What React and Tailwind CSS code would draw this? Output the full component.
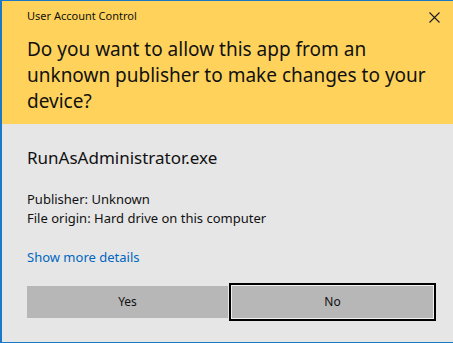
import React from 'react';

const CloseIcon = () => (
  <svg width="11" height="11" viewBox="0 0 11 11" className="block">
    <path d="M0.5 0.5 L10.5 10.5 M10.5 0.5 L0.5 10.5" stroke="#1a1a1a" strokeWidth="1.1" />
  </svg>
);

const App = () => {
  return (
    <div className="w-[453px] h-[343px] flex flex-col border-t border-b border-l-2 border-[#1a78c8] font-['Noto_Sans','Open_Sans',sans-serif] text-[#111] overflow-hidden">
      {/* Header */}
      <div className="h-[123px] shrink-0 bg-[#ffd35b] pl-[25px] pr-[12px] pt-[6px]">
        <div className="flex items-start justify-between">
          <div className="text-[11px] leading-[16px] pt-px">User Account Control</div>
          <div className="pt-[5px] pr-[1px]">
            <CloseIcon />
          </div>
        </div>
        <h1 className="mt-[12px] text-[19px] leading-[26px] font-normal pr-[10px]">
          Do you want to allow this app from an unknown publisher to make changes to your
          device?
        </h1>
      </div>

      {/* Body */}
      <div className="flex-1 bg-[#e6e6e6] pl-[25px] pt-[24px]">
        <div className="text-[17px] leading-[20px]">RunAsAdministrator.exe</div>

        <div className="mt-[22px] text-[13px] leading-[19px]">
          <p>Publisher: Unknown</p>
          <p>File origin: Hard drive on this computer</p>
        </div>

        <div className="mt-[20px] text-[13px] leading-[19px] text-[#0067c0]">
          <a href="#" className="cursor-pointer">Show more details</a>
        </div>

        <div className="mt-[16px] flex items-center">
          <button className="w-[201px] h-[32px] bg-[#b7b7b7] text-[12px] text-[#111]">
            Yes
          </button>
          <button className="ml-px w-[207px] h-[38px] border-2 border-black p-px bg-[#f2f2f2]">
            <span className="flex w-full h-full items-center justify-center bg-[#b7b7b7] text-[12px] text-[#111]">
              No
            </span>
          </button>
        </div>
      </div>
    </div>
  );
};

export default App;
